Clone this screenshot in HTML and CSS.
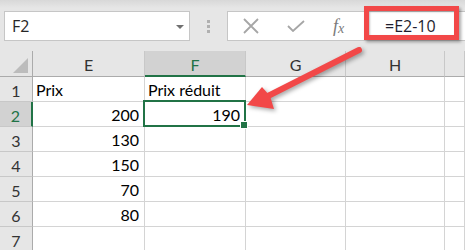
FILE: index.html
```html
<!DOCTYPE html>
<html lang="fr">
<head>
  <meta charset="UTF-8">
  <title>Prix réduit</title>
  <link rel="stylesheet" href="styles.css">
</head>
<body>

  <!-- barre de formule -->
  <div class="toolbar">
    <div class="namebox">
      <span>F2</span>
      <span class="drop"></span>
    </div>
    <div class="grip"><i></i><i></i><i></i></div>
    <div class="formula">
      <svg class="btn" width="18" height="16" viewBox="0 0 18 16">
        <path d="M2 1 L16 15 M16 1 L2 15" stroke="#a6a6a6" stroke-width="1.8" fill="none"/>
      </svg>
      <svg class="btn" width="18" height="12" viewBox="0 0 18 12">
        <path d="M1 6 L6 11 L17 1" stroke="#a6a6a6" stroke-width="1.8" fill="none"/>
      </svg>
      <span class="fx">f<sub>x</sub></span>
      <span class="value">=E2-10</span>
    </div>
  </div>

  <!-- feuille -->
  <div class="sheet">
    <div class="corner"><span class="tri"></span></div>
    <div class="colhead">E</div>
    <div class="colhead sel">F</div>
    <div class="colhead">G</div>
    <div class="colhead">H</div>
    <div class="colhead"></div>

    <div class="rowhead">1</div>
    <div class="cell">Prix</div>
    <div class="cell">Prix réduit</div>
    <div class="cell"></div><div class="cell"></div><div class="cell"></div>

    <div class="rowhead sel">2</div>
    <div class="cell num">200</div>
    <div class="cell num active">190</div>
    <div class="cell"></div><div class="cell"></div><div class="cell"></div>

    <div class="rowhead">3</div>
    <div class="cell num">130</div>
    <div class="cell"></div><div class="cell"></div><div class="cell"></div><div class="cell"></div>

    <div class="rowhead">4</div>
    <div class="cell num">150</div>
    <div class="cell"></div><div class="cell"></div><div class="cell"></div><div class="cell"></div>

    <div class="rowhead">5</div>
    <div class="cell num">70</div>
    <div class="cell"></div><div class="cell"></div><div class="cell"></div><div class="cell"></div>

    <div class="rowhead">6</div>
    <div class="cell num">80</div>
    <div class="cell"></div><div class="cell"></div><div class="cell"></div><div class="cell"></div>

    <div class="rowhead">7</div>
    <div class="cell"></div><div class="cell"></div><div class="cell"></div><div class="cell"></div><div class="cell"></div>
  </div>

  <!-- annotation : cadre + flèche -->
  <div class="callout"></div>
  <svg class="arrow" width="465" height="250" viewBox="0 0 465 250">
    <line x1="268" y1="96" x2="359" y2="50" stroke="#f24848" stroke-width="6" stroke-linecap="round"/>
    <polygon points="247,105 262,87 270,96 274,109" fill="#f24848"/>
  </svg>

</body>
</html>
```

FILE: styles.css
```css
:root {
  --bg: #e6e6e6;
  --head-sel: #d2d2d2;
  --grid: #d4d4d4;
  --head-line: #ababab;
  --green: #217346;
  --red: #f24848;
}
* { box-sizing: border-box; margin: 0; padding: 0; }
body {
  width: 465px;
  height: 250px;
  overflow: hidden;
  background: var(--bg);
  position: relative;
  font-family: "Open Sans", sans-serif;
}

/* toolbar */
.toolbar {
  height: 51px;
  padding: 11px 0 0 4px;
  display: flex;
  align-items: flex-start;
  background: linear-gradient(#d8d8d8, var(--bg) 8px);
}
.namebox {
  width: 186px;
  height: 30px;
  background: #fff;
  border: 1px solid #c6c6c6;
  display: flex;
  align-items: center;
  justify-content: space-between;
  padding: 0 5px 0 7px;
  font-size: 16px;
  color: #262626;
}
.drop {
  border-left: 4px solid transparent;
  border-right: 4px solid transparent;
  border-top: 4px solid #707070;
  margin-top: 2px;
}
.grip {
  width: 37px;
  height: 30px;
  display: flex;
  flex-direction: column;
  align-items: center;
  justify-content: center;
  gap: 2px;
}
.grip i {
  display: block;
  width: 3px;
  height: 3px;
  background: #b0b0b0;
}
.formula {
  flex: 1;
  height: 30px;
  margin-right: -10px;
  background: #fff;
  border: 1px solid #c6c6c6;
  display: flex;
  align-items: center;
  padding-left: 14px;
}
.formula .btn { margin-right: 27px; }
.formula .btn + .btn { margin-right: 28px; }
.fx {
  font-family: "Liberation Serif", serif;
  font-style: italic;
  font-size: 18px;
  color: #7a7a7a;
  width: 42px;
}
.fx sub { font-size: 14px; vertical-align: -1px; }
.value {
  font-size: 16px;
  color: #1e1e2e;
  margin-left: 10px;
}

/* sheet */
.sheet {
  display: grid;
  grid-template-columns: 33px 112px 101px 100px 99px 1fr;
  grid-template-rows: 26px repeat(7, 25px);
  font-family: Lato, sans-serif;
  font-size: 16px;
  color: #000;
}
.corner, .colhead, .rowhead {
  background: var(--bg);
  color: #333;
  display: flex;
  align-items: center;
  justify-content: center;
}
.corner {
  border-right: 1px solid var(--head-line);
  border-bottom: 1px solid var(--head-line);
  align-items: flex-end;
  justify-content: flex-end;
  padding: 0 4px 3px 0;
}
.tri {
  width: 0;
  height: 0;
  border-left: 15px solid transparent;
  border-bottom: 15px solid #bcbcbc;
}
.colhead {
  border-right: 1px solid #c8c8c8;
  border-bottom: 1px solid var(--head-line);
  padding-top: 2px;
}
.colhead.sel {
  background: var(--head-sel);
  color: var(--green);
  border-bottom: 2px solid var(--green);
}
.rowhead {
  border-right: 1px solid var(--head-line);
  border-bottom: 1px solid #c8c8c8;
  padding-top: 2px;
}
.rowhead.sel {
  background: var(--head-sel);
  color: var(--green);
  border-right: 2px solid var(--green);
}
.cell {
  background: #fff;
  border-right: 1px solid var(--grid);
  border-bottom: 1px solid var(--grid);
  display: flex;
  align-items: flex-end;
  padding: 0 3px 2px;
  white-space: nowrap;
}
.cell.num { justify-content: flex-end; padding-right: 5px; }
.cell.active { position: relative; }
.cell.active::before {
  content: "";
  position: absolute;
  top: -2px; left: -2px; right: -1px; bottom: -1px;
  border: 2px solid var(--green);
}
.cell.active::after {
  content: "";
  position: absolute;
  right: -3px; bottom: -3px;
  width: 6px; height: 6px;
  background: var(--green);
  border: 1px solid #fff;
}

/* annotation */
.callout {
  position: absolute;
  left: 364px; top: 6px;
  width: 95px; height: 34px;
  border: 5px solid var(--red);
  box-shadow: 2px 2px 3px rgba(0,0,0,0.35), inset 1px 1px 2px rgba(0,0,0,0.25);
}
.arrow {
  position: absolute;
  left: 0; top: 0;
  pointer-events: none;
  filter: drop-shadow(2px 2px 2px rgba(0,0,0,0.35));
}
```
